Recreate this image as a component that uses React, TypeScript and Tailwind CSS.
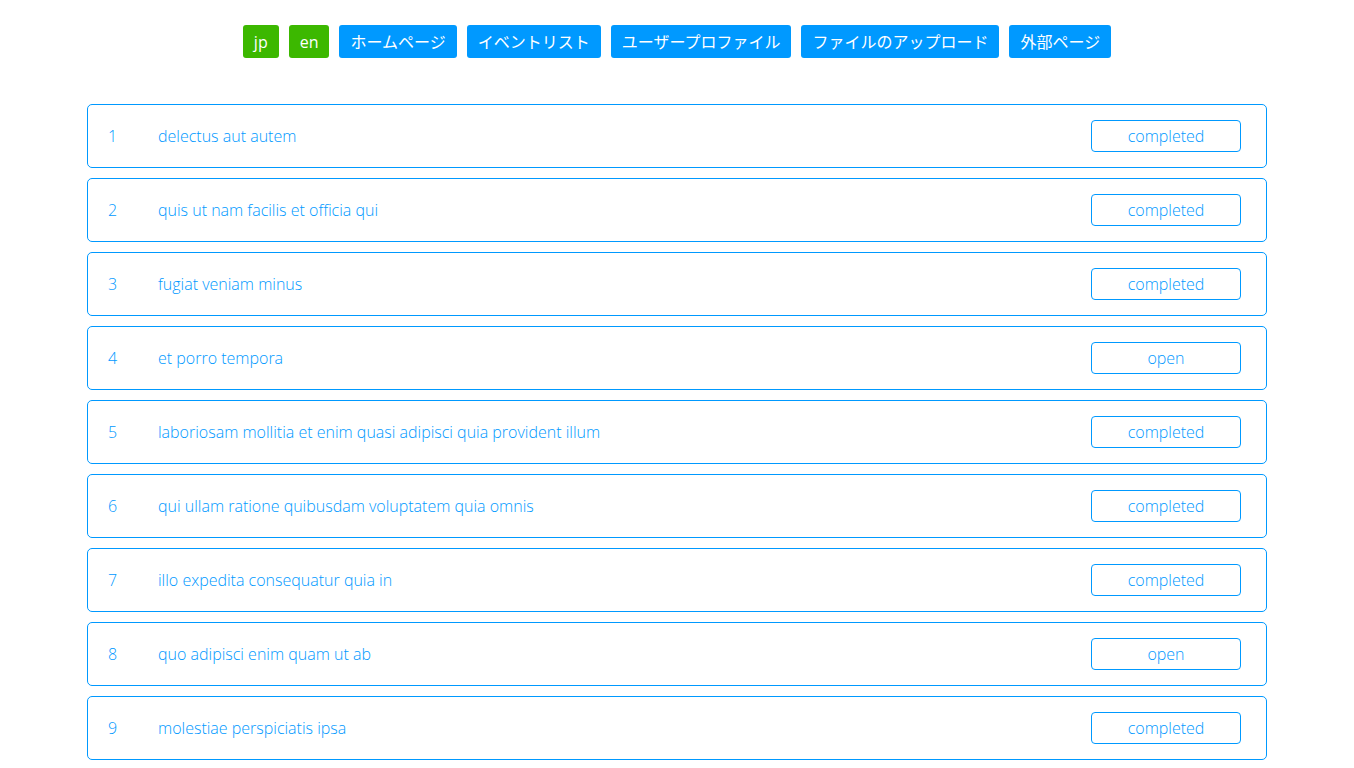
const LINKS = ["ホームページ", "イベントリスト", "ユーザープロファイル", "ファイルのアップロード", "外部ページ"];

interface Todo {
  id: number;
  title: string;
  completed: boolean;
}

const TODOS: Todo[] = [
  { id: 1, title: "delectus aut autem", completed: true },
  { id: 2, title: "quis ut nam facilis et officia qui", completed: true },
  { id: 3, title: "fugiat veniam minus", completed: true },
  { id: 4, title: "et porro tempora", completed: false },
  { id: 5, title: "laboriosam mollitia et enim quasi adipisci quia provident illum", completed: true },
  { id: 6, title: "qui ullam ratione quibusdam voluptatem quia omnis", completed: true },
  { id: 7, title: "illo expedita consequatur quia in", completed: true },
  { id: 8, title: "quo adipisci enim quam ut ab", completed: false },
  { id: 9, title: "molestiae perspiciatis ipsa", completed: true },
];

function TodoRow({ todo }: { todo: Todo }) {
  return (
    <div className="flex h-16 items-center rounded-[5px] border border-[#0099ff] pl-5 pr-[25px] font-light text-[#0099ff]">
      <span className="w-[50px]">{todo.id}</span>
      <span className="flex-1">{todo.title}</span>
      <span className="flex h-8 w-[150px] items-center justify-center rounded-[4px] border border-[#0099ff]">
        {todo.completed ? "completed" : "open"}
      </span>
    </div>
  );
}

export default function App() {
  return (
    <div className="min-h-screen bg-white pt-[25px] font-['Open_Sans','Noto_Sans_CJK_JP',sans-serif] text-base">
      <nav className="flex justify-center gap-[10px]">
        <button className="h-[33px] rounded-[3px] bg-[#3cb800] px-[11px] text-white">jp</button>
        <button className="h-[33px] rounded-[3px] bg-[#3cb800] px-[11px] text-white">en</button>
        {LINKS.map((l) => (
          <button key={l} className="h-[33px] rounded-[3px] bg-[#0099ff] px-[11px] text-white">
            {l}
          </button>
        ))}
      </nav>

      <div className="mx-auto mt-[46px] flex w-[1180px] flex-col gap-[10px]">
        {TODOS.map((t) => (
          <TodoRow key={t.id} todo={t} />
        ))}
      </div>
    </div>
  );
}
